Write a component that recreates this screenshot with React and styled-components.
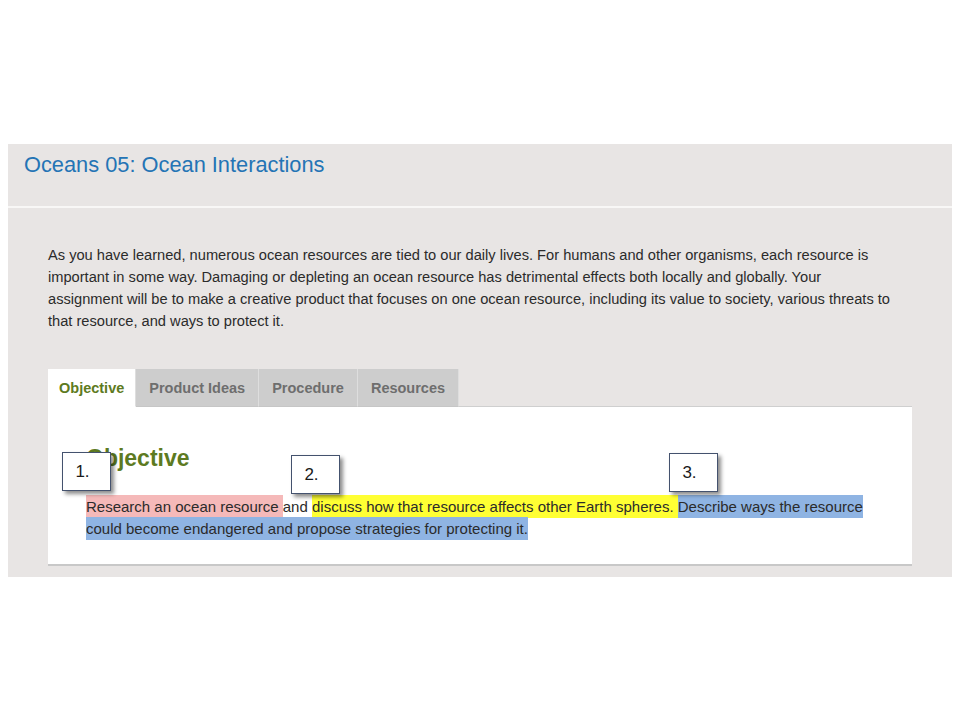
import React from "react";
import styled, { createGlobalStyle } from "styled-components";

const Global = createGlobalStyle`
  html, body { margin: 0; padding: 0; background: #ffffff; }
  body { font-family: "Liberation Sans", Arial, sans-serif; }
`;

const Page = styled.div`
  width: 960px;
  height: 720px;
  padding-top: 144px;
  box-sizing: border-box;
`;

const Frame = styled.section`
  margin: 0 8px;
  background: #e8e5e4;
  padding-bottom: 11px;
`;

const Header = styled.header`
  display: flex;
  align-items: center;
  padding: 0 16px;
  border-bottom: 2px solid #f8f7f6;
  box-sizing: border-box;
  height: 64px;
`;

const Title = styled.h1`
  margin: 0;
  font-size: 21.8px;
  font-weight: normal;
  color: #2474b5;
  transform: translateY(-10px);
`;

const Body = styled.div`
  padding: 36px 40px 0 40px;
`;

const Intro = styled.p`
  margin: 0;
  font-size: 14.65px;
  line-height: 22px;
  color: #2b2b2b;
  white-space: nowrap;
`;

const Tabs = styled.nav`
  display: flex;
  margin-top: 37px;
  height: 38px;
`;

const Tab = styled.div`
  display: flex;
  align-items: center;
  padding: 0 ${(p) => (p.$active ? "11px" : "13px")};
  font-size: 14.5px;
  font-weight: bold;
  color: ${(p) => (p.$active ? "#5d7a21" : "#6e6e6e")};
  background: ${(p) => (p.$active ? "#ffffff" : "#cdcdcd")};
  border-right: 1px solid #dedede;
  border-bottom: 1px solid ${(p) => (p.$active ? "#ffffff" : "#c6c6c6")};
`;

const Filler = styled.div`
  flex: 1;
  border-bottom: 1px solid #cfcfcf;
`;

const Panel = styled.div`
  position: relative;
  background: #ffffff;
  padding: 38px 38px 24px 38px;
  border-bottom: 2px solid #c8c8c8;
`;

const Heading = styled.h2`
  margin: 0 0 25px 0;
  font-size: 23px;
  line-height: 26px;
  font-weight: bold;
  color: #5d7a21;
`;

const Text = styled.p`
  margin: 0;
  font-size: 15px;
  line-height: 22px;
  color: #2b2b2b;
`;

const Mark = styled.span`
  background: ${(p) => p.$color};
  padding: 3px 0;
  -webkit-box-decoration-break: clone;
  box-decoration-break: clone;
`;

const Callout = styled.div`
  position: absolute;
  left: ${(p) => p.$x}px;
  top: ${(p) => p.$y}px;
  width: 49px;
  height: 39px;
  box-sizing: border-box;
  background: #ffffff;
  border: 1.5px solid #44526e;
  box-shadow: 3px 3px 4px rgba(0, 0, 0, 0.45);
  display: flex;
  align-items: center;
  justify-content: center;
  padding-right: 8px;
  font-size: 17px;
  color: #1a1a1a;
`;

export default function App() {
  return (
    <>
      <Global />
      <Page>
        <Frame>
          <Header>
            <Title>Oceans 05: Ocean Interactions</Title>
          </Header>
          <Body>
            <Intro>
              As you have learned, numerous ocean resources are tied to our daily lives. For humans and other
              organisms, each resource is
              <br />
              important in some way. Damaging or depleting an ocean resource has detrimental effects both locally
              and globally. Your
              <br />
              assignment will be to make a creative product that focuses on one ocean resource, including its
              value to society, various threats to
              <br />
              that resource, and ways to protect it.
            </Intro>
            <Tabs>
              <Tab $active>Objective</Tab>
              <Tab>Product Ideas</Tab>
              <Tab>Procedure</Tab>
              <Tab>Resources</Tab>
              <Filler />
            </Tabs>
            <Panel>
              <Heading>Objective</Heading>
              <Text>
                <Mark $color="#f5b9b9">Research an ocean resource </Mark>and{" "}
                <Mark $color="#ffff33">discuss how that resource affects other Earth spheres. </Mark>
                <Mark $color="#8fb4e3">
                  Describe ways the resource could become endangered and propose strategies for protecting it.
                </Mark>
              </Text>
              <Callout $x={14} $y={45}>1.</Callout>
              <Callout $x={243} $y={48}>2.</Callout>
              <Callout $x={621} $y={46}>3.</Callout>
            </Panel>
          </Body>
        </Frame>
      </Page>
    </>
  );
}
